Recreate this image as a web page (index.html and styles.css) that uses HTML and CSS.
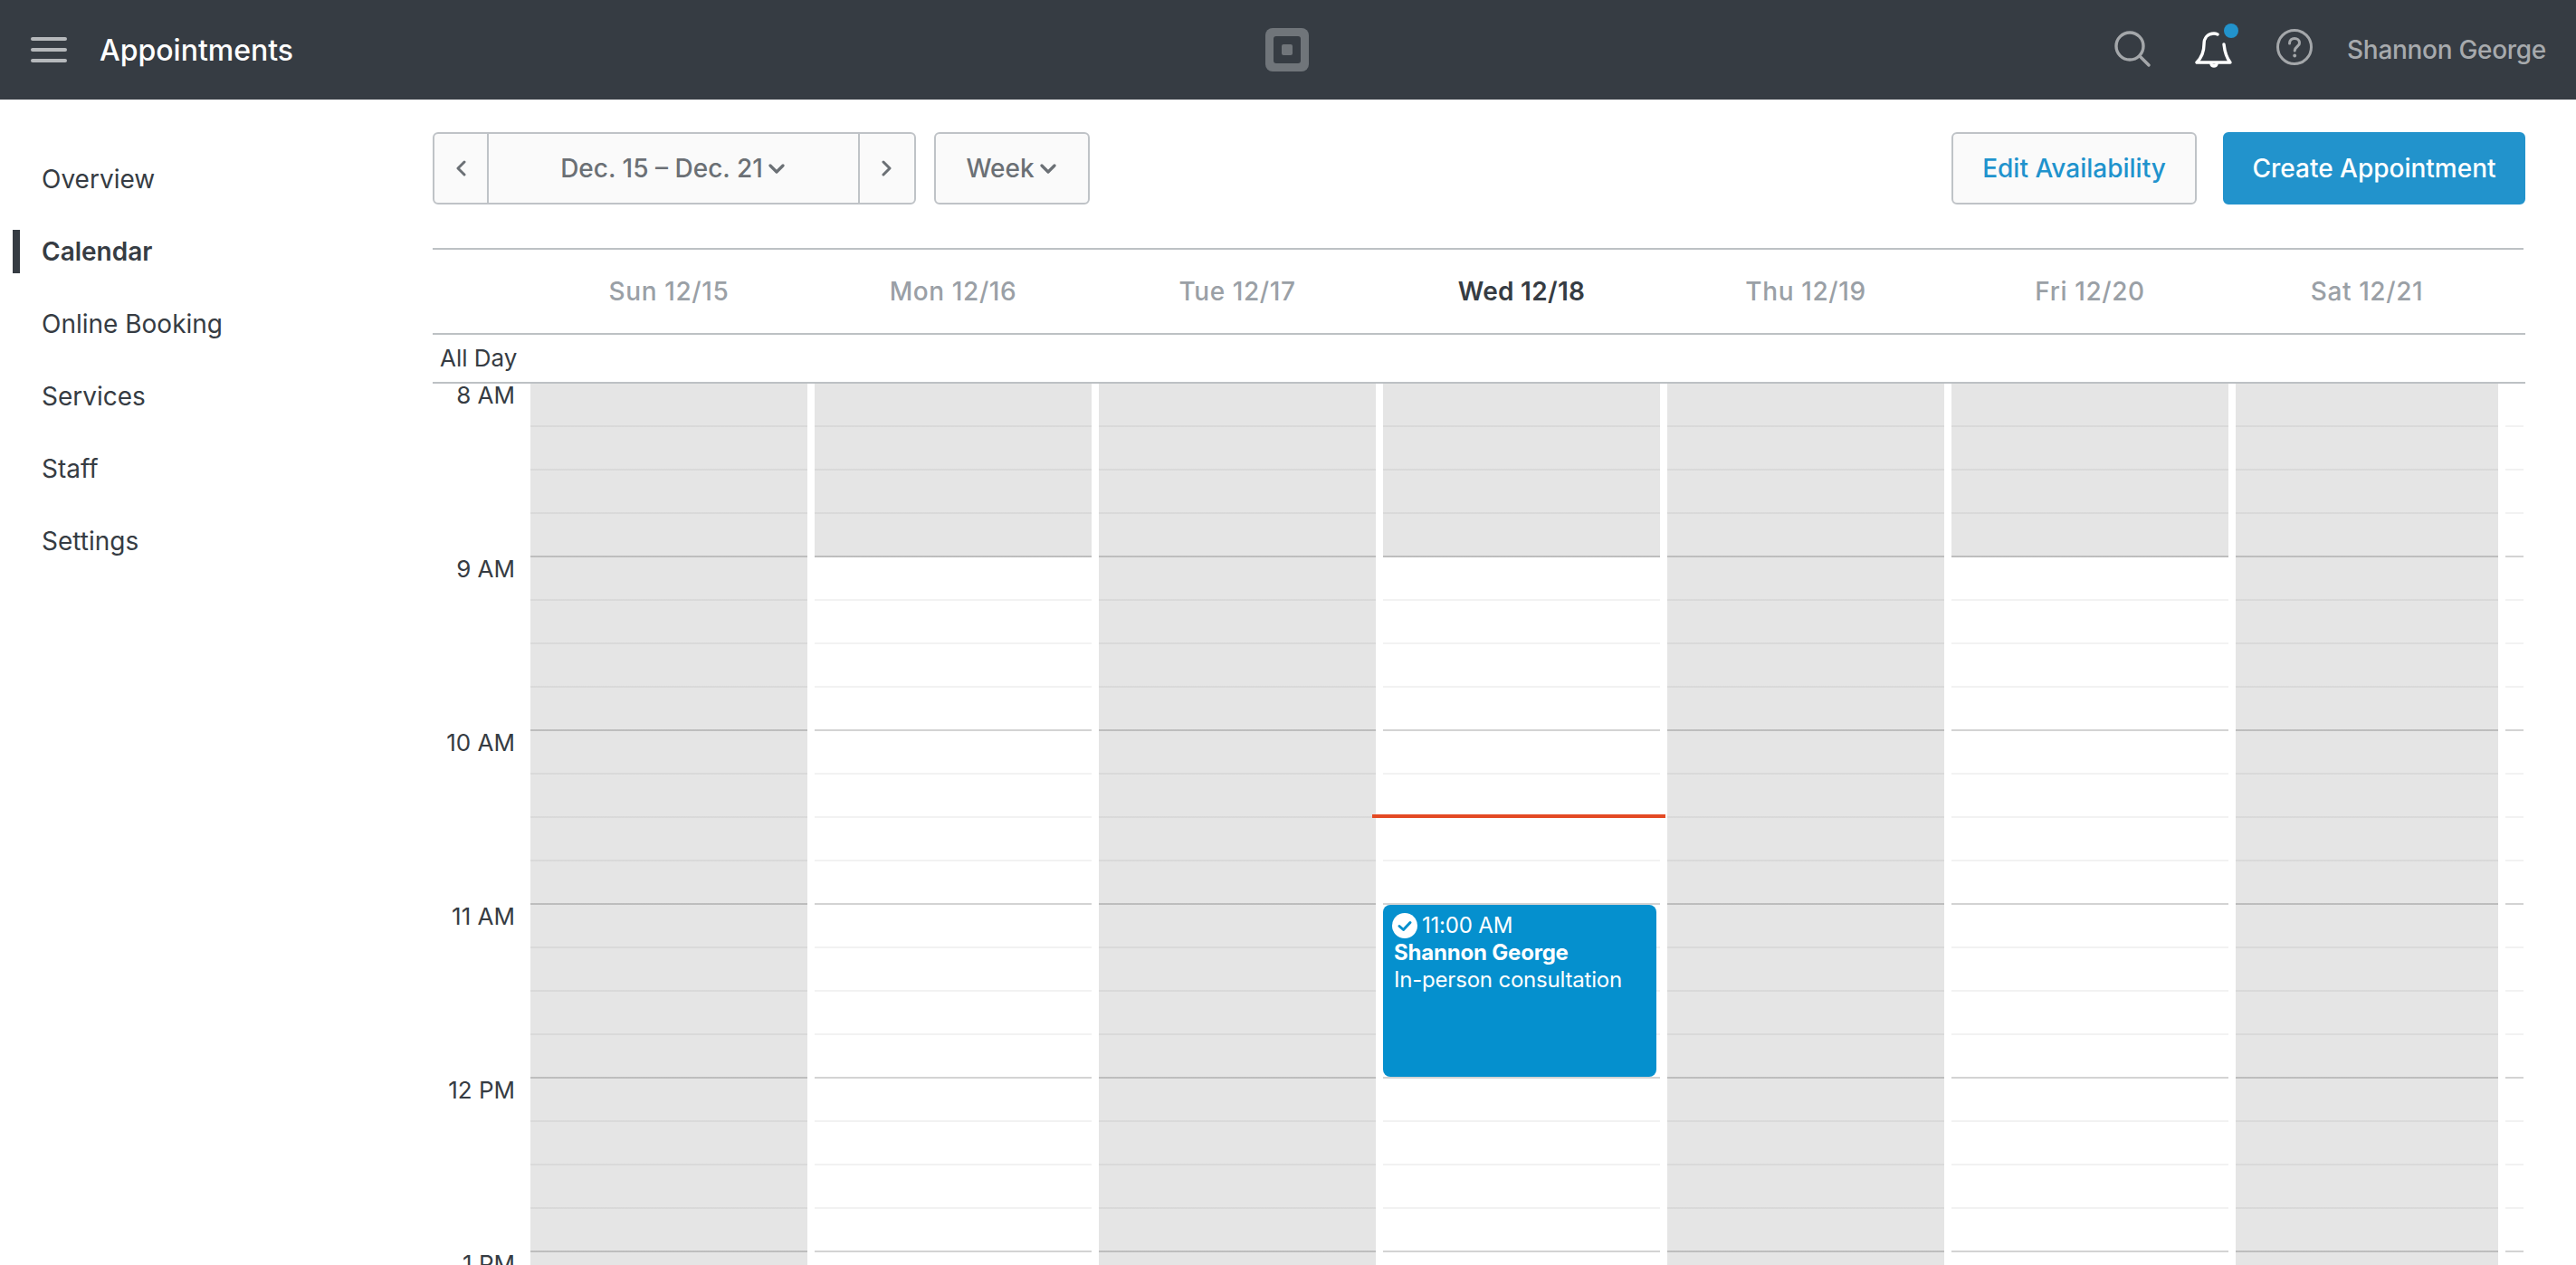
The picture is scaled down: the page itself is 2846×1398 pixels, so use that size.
FILE: index.html
```html
<!DOCTYPE html>
<html lang="en">
<head>
  <meta charset="UTF-8">
  <title>Appointments</title>
  <link rel="stylesheet" href="styles.css">
</head>
<body>

<header class="topbar">
  <div class="topbar-left">
    <div class="hamburger"><span></span><span></span><span></span></div>
    <div class="app-title">Appointments</div>
  </div>
  <div class="logo"><div class="logo-hole"><div class="logo-dot"></div></div></div>
  <div class="topbar-right">
    <svg class="icon-search" width="40" height="40" viewBox="0 0 40 40" fill="none" stroke="#a4a7aa" stroke-width="3.4" stroke-linecap="round">
      <circle cx="17" cy="17" r="15"/>
      <path d="M28 28 L38 38"/>
    </svg>
    <div class="bell">
      <svg width="42" height="42" viewBox="0 0 42 42" fill="none" stroke="#fff" stroke-width="3.4" stroke-linecap="round" stroke-linejoin="round">
        <path d="M25 4 C23 3 22 3 21 3 C14 3 10 8 10 15 C10 23 8 29 2 35 H39 C35 30 33 24 32 15"/>
        <path d="M18 37 A3.2 3.2 0 0 0 24 37" fill="#fff"/>
      </svg>
      <span class="bell-dot"></span>
    </div>
    <svg class="icon-help" width="40" height="40" viewBox="0 0 40 40" fill="none" stroke="#a4a7aa" stroke-width="3">
      <circle cx="20" cy="20" r="18.5"/>
      <path d="M14.5 16 C14.5 12.5 17 10.5 20 10.5 C23.2 10.5 25.5 12.6 25.5 15.4 C25.5 19.4 20.2 19.6 20.2 24" stroke-linecap="round"/>
      <circle cx="20.2" cy="29.5" r="1.9" fill="#a4a7aa" stroke="none"/>
    </svg>
    <div class="user-name">Shannon George</div>
  </div>
</header>

<div class="page">
  <nav class="sidebar">
    <a class="side-link">Overview</a>
    <a class="side-link active">Calendar</a>
    <a class="side-link">Online Booking</a>
    <a class="side-link">Services</a>
    <a class="side-link">Staff</a>
    <a class="side-link">Settings</a>
  </nav>

  <main class="main">
    <div class="toolbar">
      <div class="date-nav">
        <button class="btn nav-arrow">
          <svg width="12" height="18" viewBox="0 0 12 18" fill="none" stroke="#6b7075" stroke-width="3" stroke-linecap="round" stroke-linejoin="round"><path d="M10 2 L3 9 L10 16"/></svg>
        </button>
        <button class="btn nav-range">Dec. 15 – Dec. 21
          <svg class="chev" width="18" height="12" viewBox="0 0 18 12" fill="none" stroke="#6b7075" stroke-width="3.2" stroke-linecap="round" stroke-linejoin="round"><path d="M2 3 L9 10 L16 3"/></svg>
        </button>
        <button class="btn nav-arrow">
          <svg width="12" height="18" viewBox="0 0 12 18" fill="none" stroke="#6b7075" stroke-width="3" stroke-linecap="round" stroke-linejoin="round"><path d="M2 2 L9 9 L2 16"/></svg>
        </button>
      </div>
      <button class="btn view-btn">Week
        <svg class="chev" width="18" height="12" viewBox="0 0 18 12" fill="none" stroke="#6b7075" stroke-width="3.2" stroke-linecap="round" stroke-linejoin="round"><path d="M2 3 L9 10 L16 3"/></svg>
      </button>
      <button class="btn edit-btn">Edit Availability</button>
      <button class="btn create-btn">Create Appointment</button>
    </div>

    <div class="cal-head">
      <div class="day-name">Sun 12/15</div>
      <div class="day-name">Mon 12/16</div>
      <div class="day-name">Tue 12/17</div>
      <div class="day-name today">Wed 12/18</div>
      <div class="day-name">Thu 12/19</div>
      <div class="day-name">Fri 12/20</div>
      <div class="day-name">Sat 12/21</div>
    </div>

    <div class="all-day">All Day</div>

    <div class="cal-body">
      <div class="hours">
        <div class="hour">8 AM</div>
        <div class="hour">9 AM</div>
        <div class="hour">10 AM</div>
        <div class="hour">11 AM</div>
        <div class="hour">12 PM</div>
        <div class="hour">1 PM</div>
      </div>
      <div class="day closed"></div>
      <div class="day closed-first"></div>
      <div class="day closed"></div>
      <div class="day closed-first today-col">
        <div class="now-line"></div>
        <div class="event">
          <div class="event-time">
            <svg width="28" height="28" viewBox="0 0 28 28"><circle cx="14" cy="14" r="14" fill="#fff"/><path d="M8 14.5 L12.5 18.5 L20 10.5" fill="none" stroke="#0590ce" stroke-width="3" stroke-linecap="round" stroke-linejoin="round"/></svg>
            11:00 AM
          </div>
          <div class="event-name">Shannon George</div>
          <div class="event-desc">In-person consultation</div>
        </div>
      </div>
      <div class="day closed"></div>
      <div class="day closed-first"></div>
      <div class="last-day">
        <div class="day closed"></div>
        <div class="day"></div>
      </div>
    </div>
  </main>
</div>

</body>
</html>
```

FILE: styles.css
```css
* {
  box-sizing: border-box;
}

html, body {
  height: 100%;
  overflow: hidden;
}

body {
  margin: 0;
  background: #fff;
  color: #363c43;
  font-family: Inter, "Noto Sans", sans-serif;
  font-size: 28px;
  display: flex;
  flex-direction: column;
}

/* top bar */
.topbar {
  height: 110px;
  flex: none;
  background: #363c43;
  display: grid;
  grid-template-columns: 1fr auto 1fr;
  align-items: center;
}

.topbar-left {
  display: flex;
  align-items: center;
  padding-left: 34px;
}

.hamburger {
  width: 40px;
  height: 28px;
  margin-right: 36px;
  display: flex;
  flex-direction: column;
  justify-content: space-between;
}

.hamburger span {
  height: 4px;
  border-radius: 2px;
  background: #b6b9bc;
}

.app-title {
  color: #fff;
  font-size: 32px;
  font-weight: 500;
}

.logo {
  width: 48px;
  height: 48px;
  margin-left: -2px;
  border-radius: 8px;
  background: #70757a;
  display: flex;
  align-items: center;
  justify-content: center;
}

.logo-hole {
  width: 30px;
  height: 30px;
  border-radius: 3px;
  background: #363c43;
  display: flex;
  align-items: center;
  justify-content: center;
}

.logo-dot {
  width: 12px;
  height: 12px;
  border-radius: 2px;
  background: #70757a;
}

.topbar-right {
  display: flex;
  align-items: center;
  justify-content: flex-end;
  padding-right: 33px;
  color: #a7aaad;
}

.icon-search {
  margin-right: 49px;
  margin-top: -2px;
}

.bell {
  position: relative;
  width: 42px;
  height: 42px;
  margin-right: 48px;
}

.bell-dot {
  position: absolute;
  top: -8px;
  right: -6px;
  width: 16px;
  height: 16px;
  border-radius: 50%;
  background: #2293cc;
}

.icon-help {
  margin-right: 38px;
  margin-top: -6px;
}

.user-name {
  font-weight: 500;
  letter-spacing: -0.3px;
}

/* page */
.page {
  flex: 1;
  display: flex;
  min-height: 0;
}

.sidebar {
  width: 478px;
  flex: none;
  padding: 64px 0 0 14px;
}

.side-link {
  display: block;
  height: 48px;
  line-height: 48px;
  margin-bottom: 32px;
  padding-left: 24px;
  border-left: 8px solid transparent;
}

.side-link.active {
  border-left-color: #363c43;
  font-weight: 600;
}

.main {
  width: 2312px;
  flex: none;
  padding-top: 36px;
  display: flex;
  flex-direction: column;
  min-height: 0;
}

/* toolbar */
.toolbar {
  display: flex;
  height: 80px;
  flex: none;
  margin-bottom: 48px;
}

.btn {
  font-family: inherit;
  font-size: 28px;
  font-weight: 500;
  height: 80px;
  padding: 0;
  background: #fafafa;
  color: #6b7075;
  border: 2px solid #bfc3c7;
  border-radius: 6px;
  display: flex;
  align-items: center;
  justify-content: center;
}

.date-nav {
  display: flex;
  width: 534px;
  margin-right: 20px;
}

.nav-arrow {
  width: 62px;
  flex: none;
}

.date-nav .nav-arrow:first-child {
  border-radius: 6px 0 0 6px;
}

.date-nav .nav-arrow:last-child {
  width: 64px;
  border-radius: 0 6px 6px 0;
}

.nav-range {
  flex: 1;
  border-left: 0;
  border-right: 0;
  border-radius: 0;
  padding-right: 2px;
}

.chev {
  margin-left: 6px;
}

.view-btn {
  width: 172px;
  padding-right: 2px;
}

.edit-btn {
  margin-left: auto;
  width: 271px;
  color: #1f93cd;
}

.create-btn {
  margin-left: 29px;
  width: 334px;
  color: #fff;
  background: #2293cc;
  border-color: #2293cc;
}

/* calendar */
.cal-head {
  height: 94px;
  flex: none;
  border-top: 2px solid #bdc1c4;
  display: grid;
  grid-template-columns: repeat(6, 306px) 290px;
  gap: 8px;
  padding-left: 108px;
  margin-right: 2px;
  align-items: center;
}

.day-name {
  text-align: center;
  font-weight: 500;
  letter-spacing: 0.6px;
  color: #9aa0a6;
}

.day-name.today {
  color: #363c43;
  font-weight: 600;
  letter-spacing: 0.3px;
}

.all-day {
  height: 54px;
  flex: none;
  border-top: 2px solid #bdc1c4;
  border-bottom: 0;
  padding-left: 8px;
  font-size: 26px;
  line-height: 52px;
}

.cal-body {
  flex: 1;
  min-height: 0;
  border-top: 2px solid #bdc1c4;
  display: grid;
  grid-template-columns: 100px repeat(6, 306px) 318px;
  gap: 8px;
  overflow: hidden;
}

.hours {
  padding-right: 9px;
}

.hour {
  height: 192px;
  text-align: right;
  font-size: 26px;
  line-height: 26px;
}

.day {
  --quarter: repeating-linear-gradient(to bottom, transparent 0 46px, rgba(0, 0, 0, 0.05) 46px 48px);
  --full: repeating-linear-gradient(to bottom, transparent 0 190px, rgba(0, 0, 0, 0.13) 190px 192px);
  background-image: var(--full), var(--quarter);
}

.day.closed {
  background-color: #e5e5e5;
}

.day.closed-first {
  background-image: var(--full), var(--quarter), linear-gradient(#e5e5e5, #e5e5e5);
  background-size: auto, auto, 100% 192px;
  background-repeat: repeat, repeat, no-repeat;
}

.last-day {
  display: grid;
  grid-template-columns: 290px 20px;
  gap: 8px;
}

.today-col {
  position: relative;
}

.now-line {
  position: absolute;
  left: -12px;
  top: 476px;
  width: 324px;
  height: 4px;
  background: #e44a24;
}

.event {
  position: absolute;
  left: 0;
  top: 576px;
  width: 302px;
  height: 190px;
  background: #0590ce;
  border-radius: 8px;
  color: #fff;
  font-size: 24px;
  line-height: 30px;
  padding: 8px 12px;
  letter-spacing: -0.2px;
}

.event-time {
  display: flex;
  align-items: center;
  gap: 5px;
  margin-left: -2px;
}

.event-name {
  font-weight: 700;
}
```
